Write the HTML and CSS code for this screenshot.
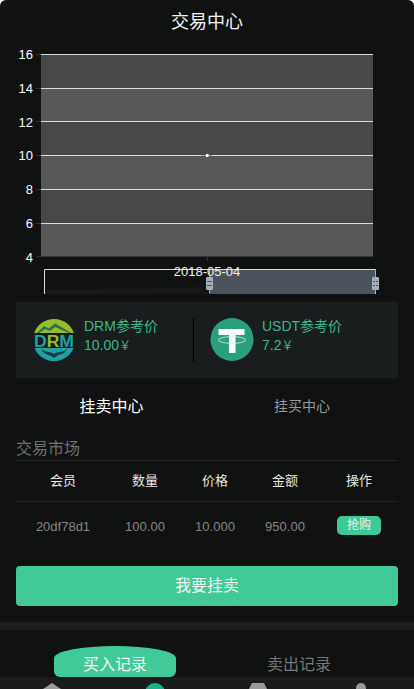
FILE: index.html
```html
<!DOCTYPE html>
<html lang="en">
<head>
    <meta charset="UTF-8">
    <title>交易中心</title>
    <meta name="viewport" content="width=device-width, initial-scale=1">
    <link rel="stylesheet" href="styles.css">
</head>
<body>
<div class="page">
    <div class="header">交易中心</div>

    <!-- chart: viewBox keeps page coordinates -->
    <svg class="chart" viewBox="0 44 414 250" width="414" height="250">
        <rect x="41" y="54" width="332" height="34" fill="#484848"/>
        <rect x="41" y="88" width="332" height="33" fill="#585858"/>
        <rect x="41" y="121" width="332" height="34" fill="#484848"/>
        <rect x="41" y="155" width="332" height="34" fill="#585858"/>
        <rect x="41" y="189" width="332" height="34" fill="#484848"/>
        <rect x="41" y="223" width="332" height="33" fill="#585858"/>
        <g stroke="#dcdcdc" stroke-width="1">
            <line x1="41" y1="54.5" x2="373" y2="54.5"/>
            <line x1="41" y1="88.5" x2="373" y2="88.5"/>
            <line x1="41" y1="121.5" x2="373" y2="121.5"/>
            <line x1="41" y1="155.5" x2="373" y2="155.5"/>
            <line x1="41" y1="189.5" x2="373" y2="189.5"/>
            <line x1="41" y1="223.5" x2="373" y2="223.5"/>
        </g>
        <g stroke="#333" stroke-width="1">
            <line x1="36" y1="54.5" x2="41" y2="54.5"/>
            <line x1="36" y1="88.5" x2="41" y2="88.5"/>
            <line x1="36" y1="121.5" x2="41" y2="121.5"/>
            <line x1="36" y1="155.5" x2="41" y2="155.5"/>
            <line x1="36" y1="189.5" x2="41" y2="189.5"/>
            <line x1="36" y1="223.5" x2="41" y2="223.5"/>
            <line x1="36" y1="256.5" x2="373" y2="256.5"/>
            <line x1="207.5" y1="256" x2="207.5" y2="261"/>
        </g>
        <g class="axis" text-anchor="end">
            <text x="33" y="59">16</text>
            <text x="33" y="93">14</text>
            <text x="33" y="127">12</text>
            <text x="33" y="160">10</text>
            <text x="33" y="194">8</text>
            <text x="33" y="228">6</text>
            <text x="33" y="262">4</text>
        </g>
        <line x1="201" y1="155.5" x2="212" y2="155.5" stroke="#e08f8f" stroke-width="1"/>
        <rect x="206" y="154" width="2.5" height="3" fill="#fff"/>

        <!-- data zoom -->
        <path d="M45 294 L45 290 L200 287 L209 294 Z" fill="#171919"/>
        <rect x="209" y="269" width="166" height="25" fill="#4b545c"/>
        <path d="M44.5 294 V269.5 H375.5 V294" fill="none" stroke="#dcdcdc" stroke-width="1"/>
        <line x1="209.5" y1="270" x2="209.5" y2="293" stroke="#a4aebd"/>
        <line x1="375.5" y1="270" x2="375.5" y2="293" stroke="#a4aebd"/>
        <rect x="206" y="277" width="7" height="13" rx="1" fill="#a4aebd"/>
        <rect x="372" y="277" width="7" height="13" rx="1" fill="#a4aebd"/>
        <g stroke="#4b545c" stroke-width="1">
            <line x1="207" y1="281.5" x2="212" y2="281.5"/>
            <line x1="207" y1="285.5" x2="212" y2="285.5"/>
            <line x1="373" y1="281.5" x2="375" y2="281.5"/>
            <line x1="373" y1="285.5" x2="375" y2="285.5"/>
            <line x1="376" y1="281.5" x2="378" y2="281.5"/>
            <line x1="376" y1="285.5" x2="378" y2="285.5"/>
        </g>
        <text class="date" x="207" y="276" text-anchor="middle">2018-05-04</text>
    </svg>

    <div class="price-panel">
        <div class="price price-drm">
            <svg class="coin" viewBox="0 0 44 44" width="44" height="44">
                <path d="M2.2 15 A21 21 0 0 1 41.8 15 Z" fill="#93bf2e"/>
                <path d="M5 15 L12 8 L17 10.5 L23 5.5 L31 10 L39 15 Z" fill="#2f6b52"/>
                <path d="M7 15 L13 11 L18 13 L23 9 L30 12 L37 15 Z" fill="#93bf2e"/>
                <path d="M2.5 30 H41.5 A21 21 0 0 1 2.5 30 Z" fill="#1da3a5"/>
                <path d="M9 31 C14 35 18 33 22 36 C26 33 30 35 35 31 C33 36 28 36 25 38 L22 40 L19 38 C15 37 11 35 9 31 Z" fill="#133f45"/>
                <text class="coin-text" x="22" y="29" text-anchor="middle" textLength="40" lengthAdjust="spacingAndGlyphs">D<tspan fill="#93bf2e">R</tspan>M</text>
            </svg>
            <div class="price-text">
                <div>DRM参考价</div>
                <div>10.00<span class="yen">￥</span></div>
            </div>
        </div>
        <div class="price-line"></div>
        <div class="price price-usdt">
            <svg class="coin" viewBox="0 0 44 44" width="44" height="44">
                <circle cx="22" cy="21.5" r="21.5" fill="#2a9f7c"/>
                <path d="M8.5 11 H34.5 V17 H25.5 V35 H19 V17 H8.5 Z" fill="#fff"/>
                <ellipse cx="22" cy="22" rx="13.5" ry="3.4" fill="none" stroke="#d8efe7" stroke-width="0.8"/>
            </svg>
            <div class="price-text">
                <div>USDT参考价</div>
                <div>7.2<span class="yen">￥</span></div>
            </div>
        </div>
    </div>

    <div class="tabs">
        <div class="tab tab-on">挂卖中心</div>
        <div class="tab">挂买中心</div>
    </div>

    <div class="market-title">交易市场</div>
    <div class="row row-head">
        <div>会员</div>
        <div>数量</div>
        <div>价格</div>
        <div>金额</div>
        <div>操作</div>
    </div>
    <div class="row row-data">
        <div>20df78d1</div>
        <div>100.00</div>
        <div>10.000</div>
        <div>950.00</div>
        <div class="buy-cell"><span class="buy">抢购</span></div>
    </div>

    <div class="sell-btn">我要挂卖</div>
    <div class="split"></div>

    <div class="records">
        <div class="record record-on">买入记录</div>
        <div class="record">卖出记录</div>
    </div>

    <div class="nav">
        <svg viewBox="0 0 28 12" width="28" height="12"><path d="M14 6 L26 14 H2 Z" fill="#9a9a9a"/></svg>
        <svg viewBox="0 0 28 12" width="28" height="12"><circle cx="14" cy="16" r="10" fill="#1bb08c"/></svg>
        <svg viewBox="0 0 28 12" width="28" height="12"><path d="M8 6 H20 L24 14 H4 Z" fill="#9a9a9a"/></svg>
        <svg viewBox="0 0 28 12" width="28" height="12"><circle cx="14" cy="11" r="5" fill="#9a9a9a"/></svg>
    </div>
</div>
</body>
</html>
```

FILE: styles.css
```css
html, body {
    margin: 0;
    padding: 0;
    background-color: #fff;
}

body {
    font-family: "Liberation Sans", "Noto Sans CJK SC", sans-serif;
    color: #fff;
}

.page {
    width: 414px;
    height: 689px;
    overflow: hidden;
    display: flex;
    flex-direction: column;
    background-color: #101111;
    border-radius: 6px 6px 0 0;
}

.header {
    height: 44px;
    line-height: 44px;
    text-align: center;
    font-size: 18px;
    color: #f4f4f4;
    flex: none;
}

.chart {
    display: block;
    flex: none;
}

.axis text {
    font-size: 13px;
    fill: #fff;
}

.date {
    font-size: 13px;
    fill: #eee;
}

.coin-text {
    font-family: "Liberation Sans", sans-serif;
    font-size: 16px;
    font-weight: bold;
    fill: #1da3a5;
}

.price-panel {
    margin: 8px 16px 0;
    height: 76px;
    background-color: #1a1d1d;
    display: flex;
    align-items: center;
    flex: none;
}

.price {
    display: flex;
    align-items: center;
}

.price-drm {
    width: 177px;
    padding-left: 16px;
    box-sizing: border-box;
}

.price-usdt {
    padding-left: 16px;
}

.coin {
    flex: none;
    display: block;
}

.price-text {
    margin-left: 8px;
    margin-bottom: 7px;
    font-size: 14px;
    line-height: 19px;
    color: #3eb78a;
}

.yen {
    font-size: 12px;
}

.price-line {
    width: 1px;
    height: 44px;
    background-color: #000;
}

.tabs {
    height: 54px;
    margin-bottom: 2px;
    display: flex;
    align-items: center;
    flex: none;
}

.tab {
    width: 190px;
    text-align: center;
    font-size: 14px;
    color: #999;
}

.tab:first-child {
    width: 191px;
    margin-left: 16px;
}

.tab-on {
    font-size: 16px;
    color: #fff;
}

.market-title {
    margin: 0 16px;
    height: 26px;
    line-height: 30px;
    font-size: 16px;
    color: #707070;
    border-bottom: 1px solid #232525;
    flex: none;
}

.row {
    margin: 0 16px;
    display: grid;
    grid-template-columns: 94px 70px 70px 70px 78px;
    align-items: center;
    text-align: center;
    flex: none;
}

.row-head {
    height: 40px;
    font-size: 13px;
    line-height: 38px;
    color: #e8e8e8;
    border-bottom: 1px solid #232525;
}

.row-data {
    height: 49px;
    margin-bottom: 15px;
    font-size: 13px;
    color: #858585;
}

.buy-cell {
    display: flex;
    justify-content: center;
}

.buy {
    display: block;
    width: 44px;
    height: 19px;
    line-height: 19px;
    margin-bottom: 3px;
    border-radius: 5px;
    background-color: #40c997;
    color: #f2f2f2;
    font-size: 12px;
}

.sell-btn {
    margin: 0 16px;
    height: 40px;
    line-height: 40px;
    border-radius: 4px;
    background-color: #41c998;
    text-align: center;
    font-size: 16px;
    color: #f4f4f4;
    flex: none;
}

.split {
    margin-top: 16px;
    height: 8px;
    background-color: #1b1d1d;
    flex: none;
}

.records {
    margin-top: 16px;
    height: 31px;
    display: flex;
    flex: none;
}

.record {
    font-size: 16px;
    color: #777;
    line-height: 38px;
    height: 31px;
    text-align: center;
}

.record:last-child {
    width: 122px;
    margin-left: 62px;
}

.record-on {
    width: 122px;
    margin-left: 54px;
    background-color: #41c998;
    color: #f4f4f4;
    border-radius: 61px 61px 6px 6px / 12px 12px 6px 6px;
}

.nav {
    height: 12px;
    background-color: #1a1c1c;
    display: flex;
    flex: none;
    overflow: hidden;
    padding-left: 38px;
    gap: 75px;
}

.nav svg {
    display: block;
    flex: none;
}
```
